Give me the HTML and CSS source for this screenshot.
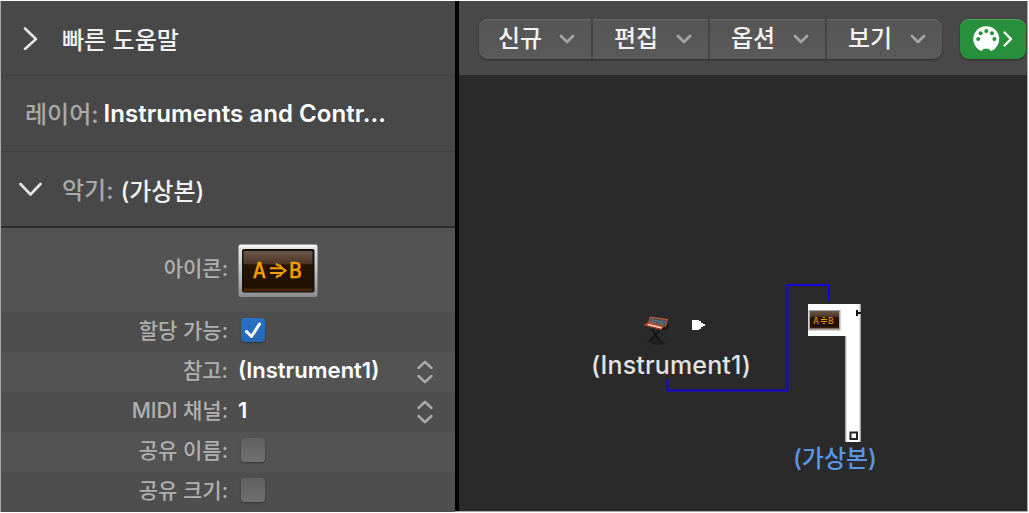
FILE: index.html
```html
<!DOCTYPE html>
<html lang="ko">
<head>
	<meta charset="UTF-8">
	<title>Environment</title>
	<link rel="stylesheet" href="styles.css">
</head>
<body>
	<div class="window">
		<div class="inspector">
			<div class="section first">
				<svg class="disclosure" width="24" height="24" viewBox="0 0 24 24"><path d="M7 2.5 L18 13 L7 23" /></svg>
				<span class="title">빠른 도움말</span>
			</div>
			<div class="section layer">
				<span class="dim">레이어:</span>
				<span class="layer_name">Instruments and Contr...</span>
			</div>
			<div class="section last">
				<svg class="disclosure" width="24" height="24" viewBox="0 0 24 24"><path d="M2.5 7 L12.5 17.5 L22.5 7" /></svg>
				<span class="dim">악기:</span>
				<span class="object_name">(가상본)</span>
			</div>

			<div class="row icon_row">
				<label>아이콘:</label>
				<svg class="lcd" width="80" height="54" viewBox="0 0 80 54">
					<defs>
						<linearGradient id="frame" x1="0" y1="0" x2="0" y2="1">
							<stop offset="0" stop-color="#ececec" />
							<stop offset=".5" stop-color="#c4c4c6" />
							<stop offset="1" stop-color="#8c8c90" />
						</linearGradient>
						<linearGradient id="glass" x1="0" y1="0" x2="0" y2="1">
							<stop offset="0" stop-color="#6c5748" />
							<stop offset=".33" stop-color="#493427" />
							<stop offset=".34" stop-color="#271500" />
							<stop offset=".9" stop-color="#201000" />
							<stop offset="1" stop-color="#5d2c08" />
						</linearGradient>
					</defs>
					<rect x=".5" y=".5" width="79" height="52.5" rx="2" fill="url(#frame)" />
					<rect x="1.5" y="1" width="77" height="2" fill="#f5f5f5" />
					<rect x="4" y="5" width="72.5" height="43.5" rx="2" fill="#17120f" />
					<rect x="5.5" y="7" width="69" height="40" fill="url(#glass)" />
					<g class="lcd_text">
						<text x="15" y="34">A</text>
						<text x="51" y="34">B</text>
					</g>
					<path class="lcd_arrow" d="M32 24.2 H44 M32 29 H44 M38 19.5 L40 21.5 H42 L44 24 L47.5 26.6 L44 29.2 L42 31.7 H40 L38 33.7" />
				</svg>
			</div>
			<div class="row odd">
				<label>할당 가능:</label>
				<span class="checkbox checked"><svg width="24" height="24" viewBox="0 0 24 24"><path d="M5.5 13.5 L10.5 18.5 L18.5 6" /></svg></span>
			</div>
			<div class="row">
				<label>참고:</label>
				<span class="value">(Instrument1)</span>
				<svg class="stepper" width="18" height="24" viewBox="0 0 18 24"><path d="M2.5 8 L9 1.8 L15.5 8 M2.5 16 L9 22.2 L15.5 16" /></svg>
			</div>
			<div class="row odd">
				<label>MIDI 채널:</label>
				<span class="value">1</span>
				<svg class="stepper" width="18" height="24" viewBox="0 0 18 24"><path d="M2.5 8 L9 1.8 L15.5 8 M2.5 16 L9 22.2 L15.5 16" /></svg>
			</div>
			<div class="row">
				<label>공유 이름:</label>
				<span class="checkbox"></span>
			</div>
			<div class="row odd">
				<label>공유 크기:</label>
				<span class="checkbox"></span>
			</div>
		</div>

		<div class="environment">
			<div class="toolbar">
				<div class="menus">
					<div class="menu"><span>신규</span><svg width="16" height="10" viewBox="0 0 16 10"><path d="M2 2 L8 8 L14 2" /></svg></div>
					<div class="menu"><span>편집</span><svg width="16" height="10" viewBox="0 0 16 10"><path d="M2 2 L8 8 L14 2" /></svg></div>
					<div class="menu"><span>옵션</span><svg width="16" height="10" viewBox="0 0 16 10"><path d="M2 2 L8 8 L14 2" /></svg></div>
					<div class="menu"><span>보기</span><svg width="16" height="10" viewBox="0 0 16 10"><path d="M2 2 L8 8 L14 2" /></svg></div>
				</div>
				<div class="midi_out">
					<svg width="42" height="28" viewBox="0 0 42 28">
						<path fill="#fff" d="M9.5 25 A13 12.8 0 1 1 19 25 L16.6 22.8 H12 Z" />
						<g fill="#288f3c">
							<circle cx="6.2" cy="13" r="2" />
							<circle cx="8.6" cy="7.3" r="2" />
							<circle cx="14.3" cy="5" r="2" />
							<circle cx="20" cy="7.3" r="2" />
							<circle cx="22.4" cy="13" r="2" />
						</g>
						<path class="arrow" d="M32.5 6.5 L39 13 L32.5 19.5" />
					</svg>
				</div>
			</div>

			<div class="canvas">
				<svg class="cables" width="568" height="436" viewBox="459 75 568 436">
					<path class="cable" d="M667.5 379 V390.5 H787.5 V285 H829 V301" />

					<!-- keyboard on its stand -->
					<path d="M646 341 L655 336 L666 343 L658 346 Z" fill="#202020" />
					<path d="M652 329 L662 344 M660 329 L649 342" stroke="#141414" stroke-width="1.5" fill="none" />
					<path d="M663 321 L669 325 L668 329 L661 330 Z" fill="#1b1210" />
					<path d="M650 316.5 L668 319 L666 327 L648 323 Z" fill="#bd5a30" />
					<path d="M651 318 L666.5 320 L665 326 L649.5 322.5 Z" fill="#44525a" />
					<path d="M652 320 L665 322 M651 322 L664 324" stroke="#879ba3" stroke-width=".8" stroke-dasharray="2 1" />
					<path d="M648 322.5 L664 326.5 L661 330 L644 325 Z" fill="#d0481c" />
					<path d="M648.5 324 L662 327.3 L661 328.7 L646.5 325.2 Z" fill="#eadfd8" />
					<path d="M644 325 L661 329.2" stroke="#a62f10" stroke-width="1" />

					<path d="M692 320 H699 V321 H701 V323 H703 V324 H705 V326 H703 V327 H701 V329 H699 V330 H692 Z" fill="#fff" />

					<path d="M808 304 H860.5 V442 H845.5 V336 H808 Z" fill="#fff" />
					<path d="M846 336 V442 M860 304 V442" stroke="#b9b9b9" stroke-width="1" />
					<rect x="808.5" y="310" width="32" height="20.5" fill="#aaa7a5" />
					<rect x="810" y="311" width="29" height="17.5" fill="url(#glass)" />
					<g class="lcd_text small">
						<text x="813.3" y="323.5">A</text>
						<text x="828" y="323.5">B</text>
					</g>
					<path d="M821 319.5 H827 M821 321.5 H827 M823 317.5 H825 M823 323.5 H825" stroke="#f5a000" stroke-width="1" />
					<path d="M856 310 H858 V312 H861 V314 H858 V316 H856 Z" fill="#111" />
					<rect x="850.5" y="432.5" width="6.5" height="6.5" fill="#fff" stroke="#222" stroke-width="2" />
				</svg>
				<span class="object instrument">(Instrument1)</span>
				<span class="object alias">(가상본)</span>
			</div>
		</div>
	</div>
</body>
</html>
```

FILE: styles.css
```css
* {
	box-sizing: border-box;
}

body {
	margin: 0;
	background: #fff;
	font-family: Inter, "Noto Sans CJK KR", sans-serif;
	font-weight: 500;
	font-size: 22px;
	color: #f2f2f2;
	overflow: hidden;
}

.window {
	display: flex;
	width: 1028px;
	height: 511px;
	margin-top: 1px;
	border: 1px solid #aaa;
	border-top: none;
	white-space: nowrap;
}

svg {
	display: block;
	flex: none;
}

.inspector {
	width: 458px;
	border-right: 4px solid #000;
	background: #535353;
}

.section {
	display: flex;
	align-items: center;
	height: 76px;
	padding-left: 17px;
	background: #484848;
	border-bottom: 1px solid #3e3e3e;
	font-size: 24px;
}

.section.first {
	height: 75px;
}

.section.last {
	border-bottom: 2px solid #2d2d2d;
}

.disclosure {
	margin-right: 20px;
}

.disclosure path {
	fill: none;
	stroke: #e4e4e4;
	stroke-width: 2.6;
	stroke-linecap: round;
	stroke-linejoin: round;
}

.layer {
	padding-left: 24px;
}

.layer_name,
.object_name {
	margin-left: 7px;
}

.layer_name {
	margin-left: 5px;
	font-weight: 600;
	letter-spacing: .05px;
	color: #fff;
}

.dim {
	padding-bottom: 2px;
	color: #a9a9a9;
}

.row {
	display: flex;
	align-items: center;
	height: 40px;
	padding-bottom: 4px;
	background: #535353;
}

.row.odd {
	background: #4e4e4e;
}

.row.icon_row {
	height: 84px;
	padding-bottom: 0;
}

label {
	width: 227px;
	margin-right: 10px;
	padding-bottom: 3px;
	text-align: right;
	color: #b0b0b0;
	font-size: 21px;
}

.icon_row label {
	padding-bottom: 6px;
}

.value {
	flex: 1;
	color: #fff;
	font-weight: 600;
}

.stepper {
	margin-top: 3px;
	margin-right: 21px;
}

.stepper path {
	fill: none;
	stroke: #aaa;
	stroke-width: 2.5;
	stroke-linecap: round;
	stroke-linejoin: round;
}

.checkbox {
	width: 24px;
	height: 24px;
	margin-left: 3px;
	border-radius: 4px;
	background: linear-gradient(#606060, #707070);
	box-shadow: 0 1px 2px #333;
}

.checkbox.checked {
	background: linear-gradient(#2a72c4, #2468b4);
}

.checkbox path {
	fill: none;
	stroke: #fff;
	stroke-width: 3;
	stroke-linecap: round;
	stroke-linejoin: round;
}

.lcd {
	margin-top: 1px;
}

.lcd_text {
	fill: #f5a000;
	stroke: #f5a000;
	stroke-width: .5;
	font-family: "DejaVu Sans Mono", monospace;
	font-size: 21px;
	font-weight: 400;
}

.lcd_text.small {
	stroke: none;
	font-size: 9px;
}

.lcd_arrow {
	fill: none;
	stroke: #f5a000;
	stroke-width: 2;
}

.environment {
	flex: 1;
	background: #2a2a2a;
}

.toolbar {
	display: flex;
	align-items: flex-start;
	height: 74px;
	padding: 18px 0 0 20px;
	background: #484848;
}

.menus {
	display: flex;
	width: 463px;
	height: 40px;
	border-radius: 9px;
	background: linear-gradient(#555, #5a5a5a);
	box-shadow: 0 1px 2px #2c2c2c, inset 0 1px 0 #6b6b6b;
}

.menu {
	display: flex;
	align-items: center;
	justify-content: space-between;
	width: 117px;
	padding: 0 16px 0 21px;
	border-left: 2px solid #454545;
	font-size: 24px;
}

.menu:first-child {
	width: 112px;
	padding-left: 19px;
	border-left: none;
}

.menu span {
	padding-bottom: 5px;
}

.menu path {
	fill: none;
	stroke: #a5a5a5;
	stroke-width: 2.8;
	stroke-linecap: round;
	stroke-linejoin: round;
}

.midi_out {
	width: 66px;
	height: 40px;
	margin-left: 18px;
	padding: 7px 0 0 12px;
	border-radius: 9px;
	background: #288f3c;
	box-shadow: 0 1px 2px #2c2c2c, inset 0 1px 0 #48a258;
}

.midi_out .arrow {
	fill: none;
	stroke: #fff;
	stroke-width: 2.4;
	stroke-linecap: round;
	stroke-linejoin: round;
}

.canvas {
	position: relative;
	height: 436px;
}

.cable {
	fill: none;
	stroke: #1405dc;
	stroke-width: 2;
}

.object {
	position: absolute;
	font-size: 24px;
	line-height: 30px;
}

.instrument {
	left: 132px;
	top: 275px;
	font-size: 25px;
	letter-spacing: .15px;
	color: #e2e2e2;
}

.alias {
	left: 334px;
	top: 369px;
	color: #5a96e6;
}
```
